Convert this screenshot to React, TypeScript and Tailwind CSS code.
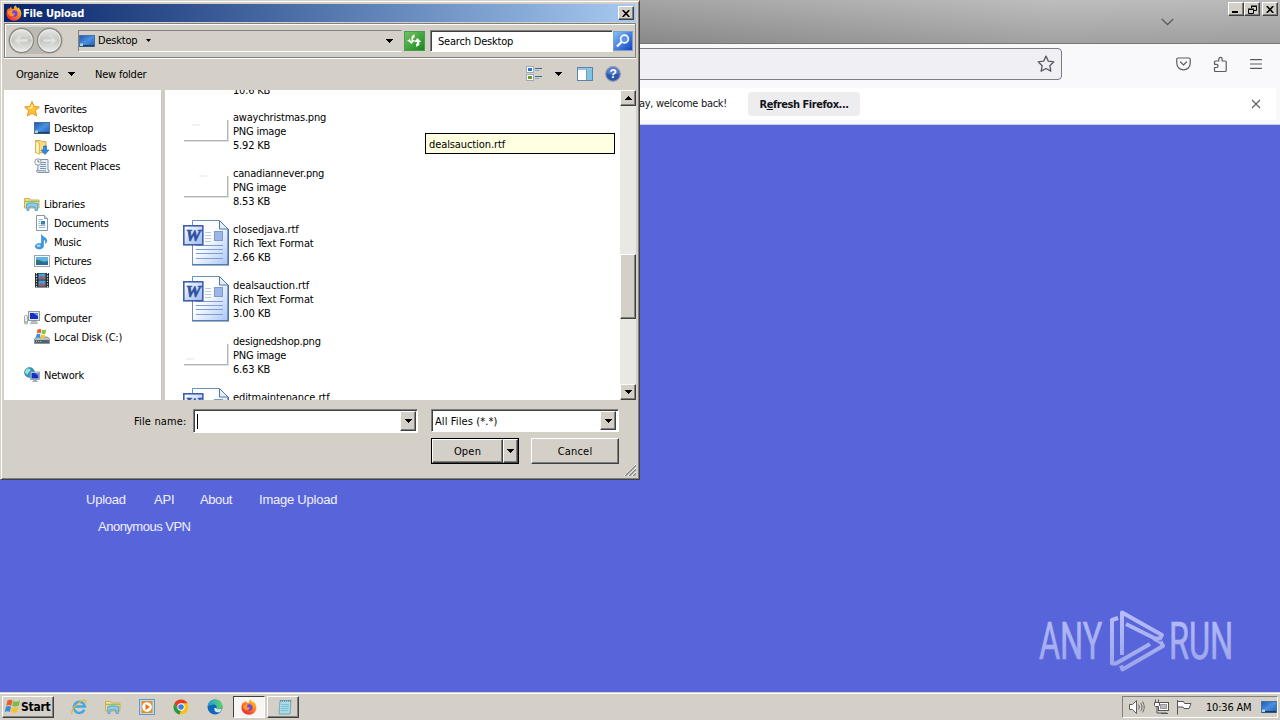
import type { ReactNode } from 'react'

type IconProps = { size?: number }

type TreeRow = {
  label: string
  icon: ReactNode
  child?: boolean
  gap?: boolean
}

type FileItem = {
  name: string
  kind: 'PNG image' | 'Rich Text Format'
  size: string
  smudge?: [number, number]
}

const RAISED =
  'border border-t-white border-l-white border-r-[#404040] border-b-[#404040] bg-[#d4d0c8] shadow-[inset_-1px_-1px_0_#808080]'
const SUNKEN =
  'border border-t-[#808080] border-l-[#808080] border-r-white border-b-white bg-white shadow-[inset_1px_1px_0_#404040]'

function FirefoxIcon({ size = 16 }: IconProps) {
  return (
    <svg width={size} height={size} viewBox="0 0 16 16">
      <defs>
        <linearGradient id="fx" x1="1" y1="0" x2="0.2" y2="1">
          <stop offset="0" stopColor="#ffe23a" />
          <stop offset="0.45" stopColor="#ff8a1c" />
          <stop offset="1" stopColor="#f0203e" />
        </linearGradient>
      </defs>
      <path
        d="M9.3 0.3c.6 1.3 1.9 2 2.7 3.2.2-.5.1-1 .1-1.3 1.8 1.4 3.4 3.6 3.3 6.5-.1 4-3.3 7-7.4 7S.5 12.6.5 8.7c0-2.4.8-4.3 1.7-5.8.1.6.3 1 .6 1.3C3.500 3.100 4.200 2.200 5.300 1.700c-.2.8 0 1.500.5 2 .9 0 1.500-.1 2.200.3-.2-1.400.2-2.800 1.300-3.700z"
        fill="url(#fx)"
      />
      <circle cx="8.200" cy="8.500" r="3.300" fill="#7542e5" />
      <path d="M2.500 6.500c1.500-1.500 3.500-1.600 5-.5-1.500.3-1.800 1.200-1.400 1.900.4.8 1.500.9 2.700.4-.2 2-1.600 3.200-3.600 2.800-2-.5-3.300-2.300-3.200-4.600z" fill="#ff9a1f" />
    </svg>
  )
}

function DesktopIcon({ size = 16 }: IconProps) {
  return (
    <svg width={size} height={size} viewBox="0 0 16 16">
      <defs>
        <linearGradient id="desk" x1="0" y1="0" x2="1" y2="1">
          <stop offset="0" stopColor="#1f55ae" />
          <stop offset="0.5" stopColor="#4a90e0" />
          <stop offset="1" stopColor="#1c5cb4" />
        </linearGradient>
      </defs>
      <rect x="0.5" y="2.5" width="15" height="11" fill="url(#desk)" stroke="#4a70a0" />
      <path d="M1 12h14v1.500H1z" fill="#1d3a5c" />
      <path d="M1 10.500h3v2.500H1z" fill="#a9d4e4" />
    </svg>
  )
}

function StarIcon() {
  return (
    <svg width="16" height="16" viewBox="0 0 16 16">
      <path d="M8 .5l2.200 4.900 5.200.6-3.900 3.500 1.100 5.400L8 12.300l-4.600 2.600 1.100-5.400L.6 6l5.200-.6z" fill="#ffc03a" stroke="#e38a16" strokeWidth="0.9" />
      <path d="M8 2.500l1.300 3.600-2.800 2L3 6.800l3.200-.4z" fill="#ffeaa0" />
    </svg>
  )
}

function DownloadsIcon() {
  return (
    <svg width="16" height="16" viewBox="0 0 16 16">
      <path d="M1.500 1.500h5l1 1.200h4.500v11H1.500z" fill="#f5dc85" stroke="#d1a744" />
      <path d="M1.500 2l4 2v11.300l-4-2z" fill="#fff0b0" stroke="#d1a744" strokeWidth="0.7" />
      <path d="M9.500 7h3v4H15l-4 4.500L7 11h2.500z" fill="#2d8be8" stroke="#1562b4" strokeWidth="0.6" />
    </svg>
  )
}

function RecentIcon() {
  return (
    <svg width="16" height="16" viewBox="0 0 16 16">
      <path d="M4.500 1.500h9.500v10.500h1v2.500H3.500z" fill="#e9f0f6" stroke="#7f92a3" />
      <path d="M7 4.500h5M7 6.500h5M6 8.500h6M6 10.500h6" stroke="#7a95b5" />
      <circle cx="4" cy="4" r="3.2" fill="#f8fafc" stroke="#8b979f" />
      <path d="M4 2.200V4h1.500" stroke="#444" strokeWidth="0.8" fill="none" />
      <path d="M2.500 12.500h9c0 1.500.5 2 2 2h-9c-1.500 0-2-.5-2-2z" fill="#c8d3dc" stroke="#7f92a3" strokeWidth="0.7" />
    </svg>
  )
}

function LibrariesIcon() {
  return (
    <svg width="16" height="16" viewBox="0 0 16 16">
      <path d="M.5 2.500h5l1 1.500h8.500v8H.5z" fill="#f4df8c" stroke="#cfae54" />
      <path d="M1 5.500h14" stroke="#8fc46c" strokeWidth="1.4" />
      <path d="M2.500 8c2-1.500 9-1.500 11.500 0l-.7 6.500h-2.300V11h-6v3.500H3z" fill="#8ccbeb" stroke="#4a94c4" strokeWidth="0.8" />
    </svg>
  )
}

function DocumentsIcon() {
  return (
    <svg width="16" height="16" viewBox="0 0 16 16">
      <path d="M2.500.5h8l3 3v12h-11z" fill="#fff" stroke="#8497ab" />
      <path d="M10.500.5v3h3" fill="#dce6ef" stroke="#8497ab" />
      <path d="M4.500 4.500h4M4.500 6.500h2M4.500 8.500h2M4.500 10.500h7M4.500 12.500h7" stroke="#9bb0c6" />
      <rect x="7" y="6" width="4" height="3.5" fill="#3285bb" />
    </svg>
  )
}

function MusicIcon() {
  return (
    <svg width="16" height="16" viewBox="0 0 16 16">
      <path d="M7.500.5c.5 2.500 5.300 2.800 5.300 6 0 1.500-.6 2.500-1.300 3 .7-2.500-.8-3.500-2-4V12c0 1.700-1.700 3-4.300 3-2.400 0-3.900-1-3.900-2.700 0-2 2.700-3.400 6.200-2.600z" fill="#3b9be8" stroke="#1c73bd" strokeWidth="0.5" />
      <ellipse cx="4.600" cy="11.800" rx="2" ry="1.200" fill="#a6dcfb" />
    </svg>
  )
}

function PicturesIcon() {
  return (
    <svg width="16" height="16" viewBox="0 0 16 16">
      <rect x="0.5" y="2.5" width="15" height="11" fill="#fff" stroke="#9aa4ad" />
      <rect x="2" y="4" width="12" height="8" fill="#5eb4e8" />
      <path d="M2 7c3-1 5 1 7 1.500s4-.5 5-.5v4H2z" fill="#2f7d63" />
      <path d="M2 10c4-1 8 0 12-.5V12H2z" fill="#2a66a8" />
    </svg>
  )
}

function VideosIcon() {
  return (
    <svg width="16" height="16" viewBox="0 0 16 16">
      <rect x="1" y="1" width="14" height="14.5" fill="#20262b" />
      <path d="M2.500 1v14.500M13.500 1v14.500" stroke="#d5dbe0" strokeWidth="1.2" strokeDasharray="1.3 1.3" />
      <rect x="4.5" y="1.5" width="7" height="6" fill="#4aa0dc" />
      <rect x="4.5" y="8.5" width="7" height="6" fill="#4aa0dc" />
      <path d="M4.500 6l3-2.500 2 2 2-3v5h-7zM4.500 13l3-2.500 2 2 2-3v5h-7z" fill="#a54b3e" opacity="0.7" />
    </svg>
  )
}

function ComputerIcon() {
  return (
    <svg width="16" height="16" viewBox="0 0 16 16">
      <rect x="4.5" y="1.5" width="11" height="9" fill="#e4e7ea" stroke="#9299a0" />
      <rect x="6" y="3" width="8" height="6" fill="#1431c4" />
      <path d="M9.500 3H14v3.500z" fill="#6f93f5" />
      <path d="M8 11h4l1.500 2.500h-7z" fill="#c3c7cc" stroke="#8b9299" strokeWidth="0.6" />
      <rect x="0.5" y="5.500" width="3" height="8.500" rx="1" fill="#edf0ee" stroke="#8d9590" strokeWidth="0.8" />
      <path d="M1.500 11h1v2h-1z" fill="#61b554" />
    </svg>
  )
}

function DiskIcon() {
  return (
    <svg width="16" height="16" viewBox="0 0 16 16">
      <path d="M.5 10l2-2h11l2 2v4.500H.5z" fill="#b9bfc4" stroke="#777f86" strokeWidth="0.8" />
      <rect x="1" y="11" width="14" height="3" fill="#4f6470" />
      <path d="M2 12.500h6" stroke="#8cd36c" strokeDasharray="1 1" />
      <path d="M3.500.7C5-.2 6-.2 7.500.5L6.700 4.300c-1.500-.6-2.500-.6-4 .2z" fill="#ee5a2a" />
      <path d="M8.200.8c1.500.6 2.600.5 4-.2l-.8 3.900c-1.400.7-2.500.7-4 .1z" fill="#83c341" />
      <path d="M2.500 5.400c1.500-.8 2.500-.8 4-.2L5.700 9c-1.500-.6-2.500-.6-4 .2z" fill="#3393de" />
      <path d="M7.200 5.500c1.500.6 2.600.5 4-.2L10.400 9c-1.400.7-2.500.7-4 .1z" fill="#fbc52d" />
    </svg>
  )
}

function NetworkIcon() {
  return (
    <svg width="16" height="16" viewBox="0 0 16 16">
      <circle cx="5.500" cy="5.500" r="5" fill="#2a9ac0" stroke="#187090" strokeWidth="0.5" />
      <path d="M3 1.500c2 0 4 .5 3.500 2S3.500 5 4 7.500C2 7.500 1 5.500 1 4.500z" fill="#9fe0d5" />
      <rect x="6.500" y="5" width="9" height="7.500" fill="#dfe3e6" stroke="#8a9198" strokeWidth="0.8" />
      <rect x="7.500" y="6" width="7" height="5.500" fill="#1431c4" />
      <path d="M11 6h3.500v3z" fill="#6f93f5" />
      <path d="M9.500 13h3l1.500 2H8z" fill="#a9aeb4" />
    </svg>
  )
}

function WordIcon() {
  return (
    <svg width="48" height="48" viewBox="0 0 48 48">
      <defs>
        <linearGradient id="page" x1="0" y1="0" x2="1" y2="1">
          <stop offset="0.4" stopColor="#fff" />
          <stop offset="1" stopColor="#a9c6f7" />
        </linearGradient>
        <linearGradient id="wbox" x1="0" y1="0" x2="1" y2="1">
          <stop offset="0" stopColor="#fff" />
          <stop offset="1" stopColor="#9db8ea" />
        </linearGradient>
      </defs>
      <path d="M10.500.5h27l8.500 8.500v35.500H10.500z" fill="url(#page)" stroke="#6f8fb8" />
      <path d="M46.300 9v36H10" fill="none" stroke="#42689c" strokeWidth="1.2" />
      <path d="M37.500.5v8.500H46z" fill="#e4eefb" stroke="#54779e" />
      <path d="M23 12.500h6M23 15.500h6M23 18.500h6M23 21.500h6" stroke="#b9c8e2" />
      <path d="M14 25.500h27M14 29.500h27M14 33.500h27M14 38.500h27" stroke="#819dcc" />
      <rect x="32.500" y="11.500" width="8" height="9" fill="#9bb7e8" stroke="#7f9bcd" />
      <rect x="1.800" y="5.800" width="19" height="19" fill="url(#wbox)" stroke="#3c5fae" strokeWidth="1.6" />
      <text x="11.200" y="21" textAnchor="middle" fontFamily="Liberation Serif, serif" fontWeight="700" fontStyle="italic" fontSize="17" fill="#2f51a5" stroke="#2f51a5" strokeWidth="0.7">
        W
      </text>
    </svg>
  )
}

function PngThumb({ smudge }: { smudge: [number, number] }) {
  return (
    <svg width="48" height="48" viewBox="0 0 48 48">
      <path d="M2 32.500h44M45.500 12v21" fill="none" stroke="#b4b4b4" />
      <path d="M2 33.500h45M46.500 12v22" fill="none" stroke="#dedede" />
      <path d={`M${smudge[0]} ${smudge[1]}h8`} stroke="#e4e4e4" />
    </svg>
  )
}

function Arrow({ up = false }: { up?: boolean }) {
  return (
    <svg width="7" height="4" viewBox="0 0 7 4" shapeRendering="crispEdges">
      <path d={up ? 'M0 4h7L3.500 0z' : 'M0 0h7L3.500 4z'} fill="#000" />
    </svg>
  )
}

function CloseGlyph() {
  return (
    <svg width="8" height="7" viewBox="0 0 8 7">
      <path d="M.7 0l6.600 7M7.300 0L.7 7" stroke="#000" strokeWidth="1.6" />
    </svg>
  )
}

function RoundArrow({ flip = false }: { flip?: boolean }) {
  return (
    <svg width="27" height="27" viewBox="0 0 27 27" className={flip ? '-scale-x-100' : ''}>
      <defs>
        <linearGradient id="round" x1="0" y1="0" x2="0" y2="1">
          <stop offset="0" stopColor="#e9e9e6" />
          <stop offset="0.5" stopColor="#c4c4c0" />
          <stop offset="1" stopColor="#efefed" />
        </linearGradient>
      </defs>
      <circle cx="13.500" cy="13.500" r="12" fill="url(#round)" stroke="#8a8a86" strokeWidth="1.3" />
      <circle cx="13.500" cy="13.500" r="10.800" fill="none" stroke="#f2f2f0" strokeWidth="0.8" />
      <path d="M13 8l-5.500 5.500L13 19M8 13.500h11.500" fill="none" stroke="#e4e4e2" strokeWidth="2.4" />
      <path d="M13 7.500l-6 6 6 6" fill="none" stroke="#a9a9a5" strokeWidth="0.5" />
    </svg>
  )
}

const TREE: TreeRow[] = [
  { label: 'Favorites', icon: <StarIcon /> },
  { label: 'Desktop', icon: <DesktopIcon />, child: true },
  { label: 'Downloads', icon: <DownloadsIcon />, child: true },
  { label: 'Recent Places', icon: <RecentIcon />, child: true },
  { label: 'Libraries', icon: <LibrariesIcon />, gap: true },
  { label: 'Documents', icon: <DocumentsIcon />, child: true },
  { label: 'Music', icon: <MusicIcon />, child: true },
  { label: 'Pictures', icon: <PicturesIcon />, child: true },
  { label: 'Videos', icon: <VideosIcon />, child: true },
  { label: 'Computer', icon: <ComputerIcon />, gap: true },
  { label: 'Local Disk (C:)', icon: <DiskIcon />, child: true },
  { label: 'Network', icon: <NetworkIcon />, gap: true },
]

const FILES: FileItem[] = [
  { name: 'awaychristmas.png', kind: 'PNG image', size: '5.92 KB', smudge: [10, 17] },
  { name: 'canadiannever.png', kind: 'PNG image', size: '8.53 KB', smudge: [17, 12] },
  { name: 'closedjava.rtf', kind: 'Rich Text Format', size: '2.66 KB' },
  { name: 'dealsauction.rtf', kind: 'Rich Text Format', size: '3.00 KB' },
  { name: 'designedshop.png', kind: 'PNG image', size: '6.63 KB', smudge: [4, 27] },
  { name: 'editmaintenance.rtf', kind: 'Rich Text Format', size: '' },
]

function TitleBar() {
  return (
    <div className="flex h-[18px] shrink-0 items-center bg-linear-to-r from-[#0a246a] to-[#a6caf0] pr-[2px] pl-[2px]">
      <FirefoxIcon />
      <span className="ml-px flex-1 text-[11px] font-bold tracking-[-0.15px] text-white">File Upload</span>
      <span className={`flex h-[14px] w-4 items-center justify-center ${RAISED}`}>
        <CloseGlyph />
      </span>
    </div>
  )
}

function AddressRow() {
  return (
    <div className="mt-[1px] flex h-[35px] shrink-0 items-center border border-[#808080] pl-[3px] shadow-[inset_1px_1px_0_#fff,0_1px_0_#fff]">
      <div className="flex rounded-full bg-[#bdbab3]">
        <RoundArrow />
        <span className="ml-[1px] flex">
          <RoundArrow flip />
        </span>
      </div>
      <div className="ml-[15px] flex h-[22px] w-[324px] items-center border border-t-[#808080] border-r-transparent border-b-white border-l-[#808080]">
        <DesktopIcon />
        <span className="ml-[3px] w-[48px]">Desktop</span>
        <svg width="5" height="3" viewBox="0 0 5 3">
          <path d="M0 0h5L2.500 3z" />
        </svg>
        <span className="flex-1" />
        <Arrow />
        <span className="w-2" />
      </div>
      <div className="ml-[2px] flex h-[20px] w-[21px] items-center justify-center border border-[#4b9b52] bg-linear-to-br from-[#6fc35f] to-[#0c8a1d]">
        <svg width="17" height="17" viewBox="0 0 17 17">
          <path d="M5.500 11V5.500l3-2.500v3.500L7 7.500V9h2l-3.500 4L1 9h2V7z" fill="#fff" transform="translate(0 -1)" />
          <path d="M11.500 6l3.800 4h-2v3l-3.300 2v-3l1-.8V10H8z" fill="#fff" />
        </svg>
      </div>
      <div className={`ml-[5px] flex h-[22px] w-[183px] items-center pt-px pl-[7px] ${SUNKEN}`}>Search Desktop</div>
      <div className="flex size-5 items-center justify-center border border-[#7ba0d2] bg-linear-to-br from-[#86bdf8] to-[#1241c0]">
        <svg width="16" height="16" viewBox="0 0 16 16" fill="none">
          <circle cx="9.500" cy="6" r="3.900" fill="#5c93ed" stroke="#fff" strokeWidth="1.6" />
          <path d="M6.500 9L2 13.500" stroke="#fff" strokeWidth="2.3" />
        </svg>
      </div>
    </div>
  )
}

function CommandBar() {
  return (
    <div className="flex h-[31px] shrink-0 items-center pr-[15px] pl-3">
      <span className="w-[52px] pt-[2px]">Organize</span>
      <Arrow />
      <span className="ml-5 flex-1 pt-[2px]">New folder</span>
      <svg width="17" height="16" viewBox="0 0 17 16">
        <rect x="0.5" y="0.5" width="7" height="6" fill="#fff" stroke="#a0a9b4" />
        <rect x="2" y="2" width="4" height="3" fill="#2677c7" />
        <rect x="0.5" y="8.500" width="7" height="6" fill="#fff" stroke="#a0a9b4" />
        <rect x="2" y="10" width="4" height="3" fill="#6d9c22" />
        <path d="M9 2.500h7M9 10.500h7" stroke="#48658e" />
        <path d="M9 4.500h4M9 12.500h4" stroke="#8ea6c5" />
      </svg>
      <span className="mr-[15px] ml-3">
        <Arrow />
      </span>
      <svg width="16" height="14" viewBox="0 0 16 14">
        <rect x="0.5" y="0.5" width="15" height="13" fill="#fff" stroke="#5b82b3" />
        <path d="M1 2h14" stroke="#9ec0e4" strokeWidth="2" />
        <rect x="10" y="3" width="5" height="10" fill="#7cc4e2" />
        <path d="M9.500 2v11" stroke="#7b9cc0" />
      </svg>
      <svg className="ml-3" width="16" height="16" viewBox="0 0 16 16">
        <circle cx="8" cy="8" r="7.300" fill="#2c56ac" stroke="#8d99b5" strokeWidth="1.2" />
        <path d="M2 7a6 6 0 0 1 12 0c-3 2-9 2-12 0z" fill="#6f98e4" opacity="0.6" />
        <text x="8" y="12.300" textAnchor="middle" fontFamily="Liberation Sans, sans-serif" fontSize="12" fontWeight="700" fill="#fff">
          ?
        </text>
      </svg>
    </div>
  )
}

function Sidebar() {
  return (
    <div className="flex w-[157px] shrink-0 flex-col bg-white pt-[9px]">
      {TREE.map((row) => (
        <div
          key={row.label}
          className={`flex h-[19px] shrink-0 items-center ${row.child ? 'pl-[30px]' : 'pl-5'} ${row.gap ? 'mt-[19px]' : ''}`}
        >
          {row.icon}
          <span className="ml-1 pt-[2px]">{row.label}</span>
        </div>
      ))}
    </div>
  )
}

function FileList() {
  return (
    <div className="flex min-w-0 flex-1 flex-col overflow-hidden bg-white pl-[17px]">
      <div className="-mt-[6px] mb-[6px] h-[14px] shrink-0 pl-[51px] leading-[14px]">10.6 KB</div>
      {FILES.map((file) => (
        <div key={file.name} className="flex h-14 shrink-0 pt-1">
          {file.smudge ? <PngThumb smudge={file.smudge} /> : <WordIcon />}
          <div className={`ml-[3px] pt-[3px] leading-[14px] ${file.smudge ? '' : 'tracking-[-0.1px]'}`}>
            <div>{file.name}</div>
            <div>{file.kind}</div>
            <div>{file.size}</div>
          </div>
        </div>
      ))}
    </div>
  )
}

function ScrollBar() {
  return (
    <div className="flex w-4 shrink-0 flex-col bg-[#eae8e3]">
      <div className={`flex h-4 shrink-0 items-center justify-center ${RAISED}`}>
        <Arrow up />
      </div>
      <div className={`mt-[148px] h-[65px] shrink-0 ${RAISED}`} />
      <div className={`mt-auto flex h-4 shrink-0 items-center justify-center ${RAISED}`}>
        <Arrow />
      </div>
    </div>
  )
}

function DialogFooter() {
  return (
    <div className="flex flex-1 flex-col pt-[9px] pl-[130px]">
      <div className="flex items-start">
        <span className="w-[59px] pt-[6px] tracking-[0.15px]">File name:</span>
        <div className={`flex h-6 w-[225px] items-center pl-[3px] ${SUNKEN}`}>
          <span className="h-[15px] w-px bg-black" />
          <span className="flex-1" />
          <span className={`mr-px flex h-5 w-4 items-center justify-center ${RAISED}`}>
            <Arrow />
          </span>
        </div>
        <div className={`ml-[13px] flex h-[23px] w-[188px] items-center pl-[3px] ${SUNKEN}`}>
          <span className="flex-1 pt-px tracking-[0.1px]">All Files (*.*)</span>
          <span className={`mr-[2px] flex h-[19px] w-4 items-center justify-center ${RAISED}`}>
            <Arrow />
          </span>
        </div>
      </div>
      <div className="mt-[5px] flex pl-[297px]">
        <div className="flex h-[26px] w-[88px] border border-black">
          <span className={`flex flex-1 items-center justify-center tracking-[0.2px] ${RAISED}`}>Open</span>
          <span className={`flex w-[15px] items-center justify-center ${RAISED}`}>
            <Arrow />
          </span>
        </div>
        <div className={`ml-3 flex h-[26px] w-[88px] items-center justify-center tracking-[0.2px] ${RAISED}`}>Cancel</div>
      </div>
      <div className="mt-auto flex justify-end">
        <svg width="12" height="12" viewBox="0 0 12 12">
          <path d="M0 12L12 0M4 12l8-8M8 12l4-4" stroke="#fff" />
          <path d="M1.200 12L12 1.200M5.200 12L12 5.200M9.200 12L12 9.200" stroke="#808080" strokeWidth="1.3" />
        </svg>
      </div>
    </div>
  )
}

function UploadDialog() {
  return (
    <div className="absolute top-0 left-0 flex h-[480px] w-[640px] flex-col border border-t-[#d4d0c8] border-r-[#404040] border-b-[#404040] border-l-[#d4d0c8] bg-[#d4d0c8] p-[3px] shadow-[inset_1px_1px_0_#fff,inset_-1px_-1px_0_#808080]">
      <TitleBar />
      <AddressRow />
      <CommandBar />
      <div className="mt-[1px] flex h-[310px] shrink-0">
        <Sidebar />
        <div className="mr-px w-[3px] shrink-0 border-r border-l border-[#c9c6be] bg-[#d4d0c8]" />
        <FileList />
        <ScrollBar />
      </div>
      <DialogFooter />
      <div className="absolute top-[132px] left-[424px] flex h-[21px] w-[190px] items-center border border-black bg-[#ffffe1] pt-px pl-[3px] tracking-[-0.1px]">
        dealsauction.rtf
      </div>
    </div>
  )
}

function BrowserChrome() {
  return (
    <div className="flex flex-col">
      <div className="flex h-11 items-start justify-end border-b border-[#777] bg-[linear-gradient(rgba(255,255,255,0.12),rgba(0,0,0,0.1)),linear-gradient(90deg,#989898_50%,#b4b4b4_82%,#b0b0b0)] pt-[2px] pr-[2px]">
        <svg className="mt-4 mr-[54px]" width="13" height="8" viewBox="0 0 13 8" fill="none">
          <path d="M.8 1l5.700 5.500L12.200 1" stroke="#5d5d5d" strokeWidth="1.3" />
        </svg>
        <span className={`flex h-[14px] w-4 items-end pb-[2px] pl-[3px] ${RAISED}`}>
          <span className="h-[2px] w-[6px] bg-black" />
        </span>
        <span className={`flex h-[14px] w-4 items-center justify-center ${RAISED}`}>
          <svg width="9" height="9" viewBox="0 0 9 9" fill="none" stroke="#000">
            <path d="M3.500 3V1.500h5v4H6M3 1h6M.5 4.500h5v4h-5zM0 4h6" />
          </svg>
        </span>
        <span className={`ml-[2px] flex h-[14px] w-4 items-center justify-center ${RAISED}`}>
          <CloseGlyph />
        </span>
      </div>
      <div className="flex h-11 items-center bg-[#f9f9fb] pr-[17px] pl-[500px]">
        <div className="-mt-1 flex h-8 w-[562px] items-center justify-end rounded-[4px] border border-[#7c7c87] bg-[#f0f0f4] pr-[6px]">
          <svg width="18" height="18" viewBox="0 0 16 16" fill="none" stroke="#5b5b66" strokeWidth="1.2" strokeLinejoin="round">
            <path d="M8 1l2.100 4.500 4.900.6-3.600 3.400.9 4.900L8 12l-4.300 2.400.9-4.900L1 6.100l4.900-.6z" />
          </svg>
        </div>
        <span className="-mt-1 ml-auto flex items-center gap-[21px]">
          <svg width="15" height="14" viewBox="0 0 15 14" fill="none" stroke="#5b5b66" strokeWidth="1.2" strokeLinecap="round">
            <path d="M2 1h11c.7 0 1.200.5 1.200 1.200V6.500a6.700 6.300 0 0 1-13.400 0V2.200C.8 1.500 1.300 1 2 1zM4.500 5l3 2.900L10.500 5" />
          </svg>
          <svg width="16" height="17" viewBox="0 0 16 17" fill="none" stroke="#5b5b66" strokeWidth="1.2" strokeLinejoin="round">
            <path d="M3.500 15.500c-.6 0-1-.4-1-1V11.500h1.800c1 0 1.700-.7 1.700-1.600S5.300 8.300 4.300 8.300H2.500V6c0-.6.4-1 1-1h3.300V3.200c0-1 .7-1.800 1.700-1.800s1.700.8 1.700 1.800V5h3c.6 0 1 .4 1 1v8.500c0 .6-.4 1-1 1z" />
          </svg>
          <svg width="14" height="10" viewBox="0 0 14 10" stroke="#5b5b66" strokeWidth="1.2">
            <path d="M1 .6h12M1 5h12M1 9.400h12" />
          </svg>
        </span>
      </div>
      <div className="flex h-[37px] border-b border-[#cfcfe4] bg-[#f9f9fb] pr-1 pb-1">
        <div className="flex flex-1 items-center rounded-[3px] bg-white pr-[15px] pl-[639px]">
          <span className="-mt-px w-[109px] text-[11px] tracking-[-0.3px] text-[#15141a]">ay, welcome back!</span>
          <span className="flex h-6 w-28 items-center justify-center rounded-[4px] bg-[#ededf0] text-[11px] font-bold tracking-[-0.45px] whitespace-pre text-[#15141a]">
            R<u>e</u>fresh Firefox...
          </span>
          <svg className="ml-auto" width="10" height="10" viewBox="0 0 10 10">
            <path d="M1 1l8 8M9 1L1 9" stroke="#5b5b66" strokeWidth="1.1" />
          </svg>
        </div>
      </div>
    </div>
  )
}

function PageLinks() {
  return (
    <div className="flex flex-1 flex-col bg-[#5865da] pt-[366px] pl-[86px] font-['Liberation_Sans',sans-serif] text-[13px] leading-[17px] tracking-[-0.23px] text-[#f0f0ff]">
      <div className="flex">
        <span className="w-[68px]">Upload</span>
        <span className="w-[46px]">API</span>
        <span className="w-[59px] tracking-[-0.4px]">About</span>
        <span>Image Upload</span>
      </div>
      <div className="mt-[10px] ml-3 tracking-[-0.5px]">Anonymous VPN</div>
    </div>
  )
}

function Watermark() {
  return (
    <svg className="absolute top-[606px] left-[1034px]" width="202" height="70" viewBox="0 0 202 70" fill="none">
      <defs>
        <linearGradient id="wm" gradientUnits="userSpaceOnUse" x1="0" y1="0" x2="0" y2="66">
          <stop offset="0" stopColor="#b9c0fa" />
          <stop offset="1" stopColor="#9aa3e8" />
        </linearGradient>
      </defs>
      <g fill="url(#wm)" stroke="url(#wm)" strokeWidth="0.6" fontFamily="Roboto, sans-serif" fontSize="51" fontWeight="400">
        <text x="5" y="53" textLength="63" lengthAdjust="spacingAndGlyphs">
          ANY
        </text>
        <text x="135" y="53" textLength="64" lengthAdjust="spacingAndGlyphs">
          RUN
        </text>
      </g>
      <g stroke="url(#wm)" strokeWidth="4" strokeLinejoin="round">
        <path d="M84 12l-6 2v43.500h4L116 38" />
        <path d="M88 49V6.500L128 29l-2 3.500h-5L92 18" />
        <path d="M87 59.500l1.500 4L129 40l-2.500-4.500" />
        <path d="M129 38.500L119 33" strokeWidth="2" />
      </g>
    </svg>
  )
}

function Taskbar() {
  return (
    <div className="flex h-7 shrink-0 items-center border-t border-[#d4d0c8] bg-[#d4d0c8] pt-[1px] pr-[2px] pl-[2px] shadow-[inset_0_1px_0_#fff]">
      <div className={`flex h-[22px] w-[52px] items-center pl-[1px] ${RAISED}`}>
        <svg width="17" height="16" viewBox="0 0 17 16">
          <path d="M3.500 1.500c2-1.200 3.500-1 5 0L7.300 6.800c-1.500-1-3.200-1-5 0z" fill="#ed5a2c" />
          <path d="M9.300 2c2 1 4 1 6.700-.5l-1.200 5c-2 1.300-4.500 1.300-6.500.4z" fill="#7dbb42" />
          <path d="M2 7.800c2-1.100 3.500-1 5 0L5.800 13c-1.500-1-3.200-1-5 0z" fill="#348ddb" />
          <path d="M8 8.200c2 1 4 1 6.500-.5l-1.200 5c-2 1.300-4.500 1.300-6.500.4z" fill="#fbc12d" />
        </svg>
        <span className="text-[12px] font-bold tracking-[-0.25px]">Start</span>
      </div>
      <div className="ml-[17px] flex items-center gap-[18px]">
        <svg width="16" height="16" viewBox="0 0 16 16" fill="none">
          <path d="M13.400 10.800a5.600 5.600 0 1 1 .5-3.300H4" stroke="#3fa9e4" strokeWidth="2.5" />
          <path d="M1 15C-.5 12 5 4 12 1.300c3-1 3.500.7 2.500 2.700" stroke="#e8b62f" strokeWidth="1.2" />
        </svg>
        <LibrariesIcon />
        <svg width="16" height="16" viewBox="0 0 16 16">
          <rect x="0.5" y="0.5" width="15" height="15" fill="#b9dcf2" stroke="#569bcb" />
          <rect x="2.500" y="2" width="11" height="12" fill="#f08a1d" />
          <circle cx="8" cy="8" r="4.800" fill="#fff" />
          <path d="M6.500 5l4.500 3-4.500 3z" fill="#e6740e" />
        </svg>
        <svg width="16" height="16" viewBox="0 0 16 16">
          <circle cx="8" cy="8" r="7.500" fill="#fbc116" />
          <path d="M1.500 4.300A7.500 7.500 0 0 1 14.500 4.300H8L5 9.800z" fill="#e33b2e" />
          <path d="M1.500 4.300L5 10l3 1.500-1.500 3.900A7.500 7.500 0 0 1 1.500 4.300z" fill="#279847" />
          <circle cx="8" cy="8" r="3.700" fill="#fff" />
          <circle cx="8" cy="8" r="2.800" fill="#3f7ee8" />
        </svg>
        <svg width="16" height="16" viewBox="0 0 16 16">
          <defs>
            <linearGradient id="edge" x1="0" y1="0" x2="1" y2="0">
              <stop offset="0" stopColor="#1f9ee0" />
              <stop offset="1" stopColor="#5fd35c" />
            </linearGradient>
          </defs>
          <circle cx="8" cy="8" r="7.500" fill="#1168b8" />
          <path d="M.5 7.500C1 3 4.500.5 8 .5c4.500 0 7.500 3 7.500 6 0 2.500-2 3.800-4 3.800-1.500 0-2.500-.5-2-1.300.8-1.500-.5-3.500-3-3.500S1.500 6.500.5 7.500z" fill="url(#edge)" />
          <path d="M9.500 9c-.5.8.5 1.300 2 1.300 1.300 0 2.400-.3 3.500-.8-.5 2-1.500 3-2.500 3.800-3 .7-6-1.300-5-4.300z" fill="#d4e6ee" />
        </svg>
      </div>
      <div className="ml-[10px] flex h-[22px] w-8 items-center justify-center border border-t-[#404040] border-r-white border-b-white border-l-[#404040] bg-[#f7f6f4]">
        <FirefoxIcon />
      </div>
      <div className={`ml-[2px] flex h-[22px] w-8 items-center justify-center pl-1 ${RAISED}`}>
        <svg width="16" height="16" viewBox="0 0 16 16">
          <path d="M3 1.500h11l-1 13.500H2z" fill="#a8dcea" stroke="#5d93a5" strokeWidth="0.7" />
          <path d="M3 2h11" stroke="#647a83" strokeWidth="1.6" strokeDasharray="1 1" />
          <path d="M4.500 5.500h7.500M4.300 7.500h7.500M4 9.500h7.500M3.800 11.500h7.500" stroke="#6fb3c9" strokeWidth="0.7" />
        </svg>
      </div>
      <div className="ml-auto flex h-[22px] w-[156px] items-center border border-t-[#808080] border-r-white border-b-white border-l-[#808080] pl-[5px]">
        <svg width="17" height="16" viewBox="0 0 17 16" fill="none" stroke="#5c5c5c">
          <path d="M1.500 5.500h3l4-4v13l-4-4h-3z" fill="#fff" />
          <path d="M10.500 5.500c1 1.500 1 3.500 0 5M12.500 3.800c2 2.500 2 6 0 8.400M14.500 2.500c2.300 3.500 2.300 7.500 0 11" strokeWidth="0.9" />
        </svg>
        <svg className="ml-[8px]" width="17" height="16" viewBox="0 0 17 16" fill="none" stroke="#555">
          <rect x="5.500" y="3.500" width="10" height="8" fill="#fff" />
          <rect x="7.500" y="5.500" width="6" height="4" fill="#bbb" stroke="#999" />
          <path d="M1.500 3.500h5v3l-1 1h-3l-1-1z" fill="#fff" />
          <path d="M2.500.5v3M5.500.5v3M4 7.500v6.500h10M8 14.500h7" />
        </svg>
        <svg className="ml-[6px]" width="16" height="16" viewBox="0 0 16 16" fill="#fff" stroke="#555">
          <path d="M1.500 1v14.500M1.500 2.500h6l1 2h6.500l-2 5H8l-1-1.500H1.500z" />
        </svg>
        <span className="ml-[14px] w-[55px] whitespace-nowrap">10:36 AM</span>
        <DesktopIcon />
      </div>
    </div>
  )
}

export default function App() {
  return (
    <div className="relative flex h-[720px] w-[1280px] flex-col overflow-hidden bg-[#d4d0c8] font-['DejaVu_Sans_Condensed','DejaVu_Sans',sans-serif] text-[11px] leading-[13px] tracking-[-0.2px] text-black [&_svg]:shrink-0">
      <BrowserChrome />
      <PageLinks />
      <Taskbar />
      <UploadDialog />
      <Watermark />
    </div>
  )
}
